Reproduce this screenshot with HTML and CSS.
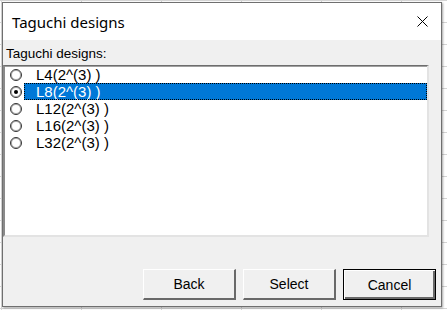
FILE: index.html
```html
<!DOCTYPE html>
<html lang="en">
<head>
    <meta charset="UTF-8">
    <title>Taguchi designs</title>
    <link rel="stylesheet" href="styles.css">
</head>
<body>
    <div class="dialog">
        <div class="title-bar">
            <span class="title">Taguchi designs</span>
            <span class="close">
                <svg width="11" height="11" viewBox="0 0 11 11">
                    <path d="M0.5 0.5 L10.5 10.5 M10.5 0.5 L0.5 10.5" stroke="#000" stroke-width="1" fill="none"/>
                </svg>
            </span>
        </div>
        <div class="client">
            <div class="caption">Taguchi designs:</div>
            <div class="list">
                <div class="row">
                    <span class="radio"></span>
                    <span class="item">L4(2^(3) )</span>
                </div>
                <div class="row">
                    <span class="radio checked"></span>
                    <span class="item selected">L8(2^(3) )</span>
                </div>
                <div class="row">
                    <span class="radio"></span>
                    <span class="item">L12(2^(3) )</span>
                </div>
                <div class="row">
                    <span class="radio"></span>
                    <span class="item">L16(2^(3) )</span>
                </div>
                <div class="row">
                    <span class="radio"></span>
                    <span class="item">L32(2^(3) )</span>
                </div>
            </div>
            <div class="buttons">
                <button class="btn">Back</button>
                <button class="btn">Select</button>
                <button class="btn default">Cancel</button>
            </div>
        </div>
    </div>
</body>
</html>
```

FILE: styles.css
```css
body {
    margin: 0;
    width: 447px;
    height: 310px;
    overflow: hidden;
    background-color: #ffffff;
    background-image:
        linear-gradient(90deg, #d4d4d4 1px, transparent 1px),
        linear-gradient(180deg, #d4d4d4 1px, transparent 1px);
    background-size: 80px 22px;
    background-position: 1px 0;
    font-family: "Liberation Sans", Arial, sans-serif;
}

.dialog {
    margin: 2px 0 0 2px;
    width: 440px;
    height: 305px;
    box-sizing: border-box;
    border: 1px solid #6f6f6f;
    background: #f0f0f0;
    display: flex;
    flex-direction: column;
    box-shadow: 1px 1px 2px rgba(0, 0, 0, 0.35);
}

.title-bar {
    height: 37px;
    background: #ffffff;
    display: flex;
    align-items: center;
    padding-left: 9px;
    padding-right: 13px;
}

.title {
    flex: 1;
    font-family: "Noto Sans", "Open Sans", sans-serif;
    font-size: 15px;
    color: #000;
    margin-top: 1px;
}

.close {
    width: 11px;
    height: 11px;
    display: flex;
}

.client {
    flex: 1;
    display: flex;
    flex-direction: column;
    padding: 0 5px 6px 0;
}

.caption {
    font-size: 13.5px;
    line-height: 16px;
    padding: 6px 0 0 3px;
    height: 25px;
    box-sizing: border-box;
    color: #000;
}

.list {
    height: 172px;
    margin-right: 7px;
    box-sizing: border-box;
    background: #ffffff;
    border-style: solid;
    border-width: 1px 2px 2px 2px;
    border-color: #6d6d6d #e3e3e3 #e3e3e3 #8a8a8a;
    box-shadow: inset 0 1px 0 #a0a0a0;
}

.row {
    display: flex;
    align-items: center;
    height: 17px;
}

.radio {
    width: 12px;
    height: 12px;
    box-sizing: border-box;
    border-radius: 50%;
    border: 1px solid #333;
    box-shadow: inset 0 0 0 1px #a8a8a8;
    margin-left: 5px;
    margin-right: 2px;
    display: flex;
    align-items: center;
    justify-content: center;
    background: #fff;
}

.radio.checked::after {
    content: "";
    width: 4px;
    height: 4px;
    border-radius: 50%;
    background: #000;
}

.item {
    flex: 1;
    height: 17px;
    box-sizing: border-box;
    padding-left: 11px;
    font-size: 15px;
    line-height: 16px;
    border: 1px solid transparent;
    color: #000;
}

.item.selected {
    background: #0078d7;
    color: #fff;
    border: 1px dotted #f7941d;
    outline: 1px dotted #000;
    outline-offset: -1px;
}

.buttons {
    margin-top: auto;
    display: flex;
    justify-content: flex-end;
    gap: 7px;
}

.btn {
    width: 93px;
    height: 31px;
    box-sizing: border-box;
    font-family: "Liberation Sans", Arial, sans-serif;
    font-size: 14px;
    color: #000;
    background: #f0f0f0;
    border-style: solid;
    border-width: 1px 2px 2px 1px;
    border-color: #ffffff #696969 #696969 #ffffff;
    padding: 0;
}

.btn.default {
    border: 1px solid #000;
    box-shadow: inset 1px 1px 0 #fff, inset -2px -2px 0 #696969;
}
```
